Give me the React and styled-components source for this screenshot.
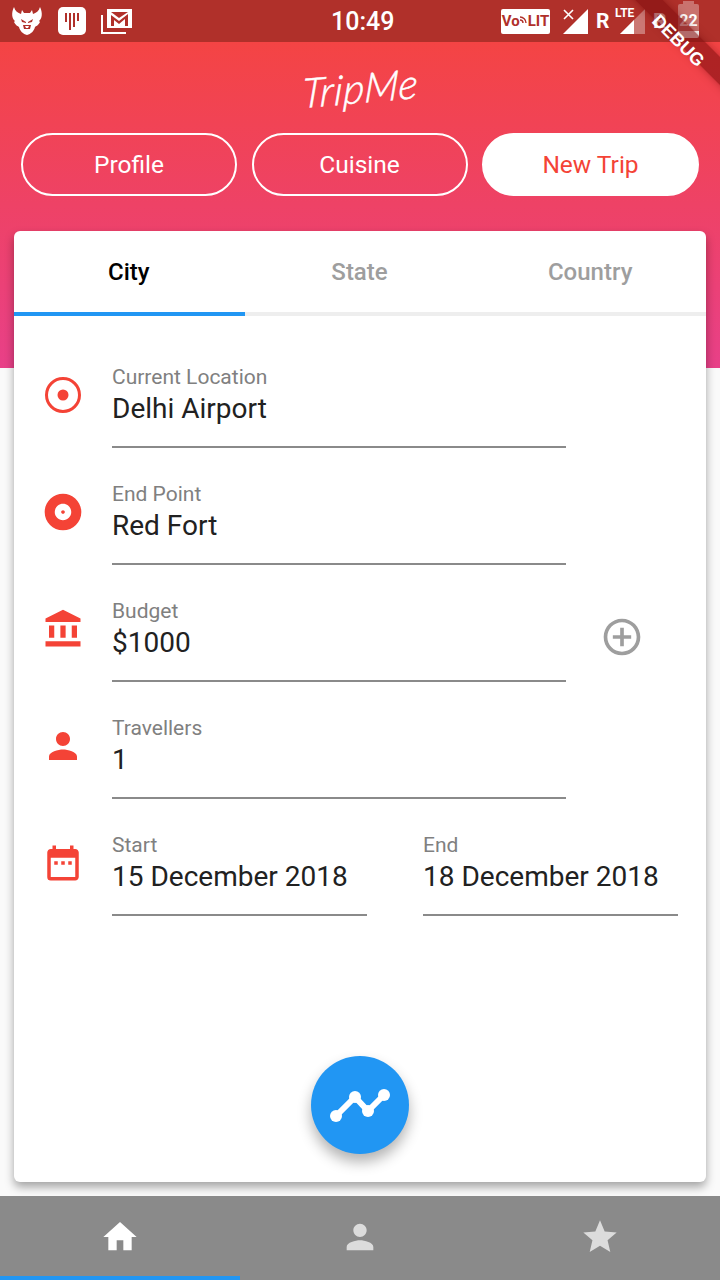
import React from "react";
import styled, { createGlobalStyle } from "styled-components";
import {
  MdAlbum,
  MdAccountBalance,
  MdPerson,
  MdDateRange,
  MdAddCircleOutline,
  MdHome,
  MdStar,
} from "react-icons/md";

const GlobalStyle = createGlobalStyle`
  html, body {
    margin: 0;
    padding: 0;
    background: #fafafa;
    font-family: Roboto, "Liberation Sans", sans-serif;
  }
  * {
    box-sizing: border-box;
  }
`;

const Screen = styled.div`
  width: 720px;
  height: 1280px;
  position: relative;
  overflow: hidden;
  display: flex;
  flex-direction: column;
  background: #fafafa;
`;

const StatusBar = styled.div`
  height: 42px;
  flex: none;
  background: #b0302a;
  display: grid;
  grid-template-columns: 320px 62px 1fr;
  align-items: center;
  padding: 0 21px 0 11px;
  color: #fff;
`;

const StatusLeft = styled.div`
  display: flex;
  align-items: center;
  gap: 15px;
`;

const StatusRight = styled.div`
  display: flex;
  align-items: center;
  justify-content: flex-end;
  gap: 8px;
`;

const Clock = styled.div`
  font-size: 25px;
  font-weight: 500;
  white-space: nowrap;
`;

const VolteBadge = styled.div`
  width: 49px;
  height: 25px;
  margin-right: 5px;
  background: #fff;
  border-radius: 2px;
  color: #b0302a;
  font-size: 15px;
  font-weight: 700;
  display: flex;
  align-items: center;
  justify-content: center;
  white-space: nowrap;
`;

const NetLetter = styled.span`
  font-size: 21px;
  font-weight: 700;
  width: 11px;
  line-height: 24px;
`;

const SignalWrap = styled.div`
  position: relative;
  width: ${(props) => props.width}px;
  height: 25px;
  display: flex;
  justify-content: flex-end;
`;

const TinyTag = styled.span`
  position: absolute;
  left: 0;
  top: -3px;
  font-size: 12px;
  font-weight: 700;
  line-height: 14px;
`;

const Battery = styled.div`
  width: 21px;
  height: 34px;
  margin-left: 6px;
  border-radius: 2px;
  background: linear-gradient(
    to bottom,
    rgba(255, 255, 255, 0.32) 78%,
    #fff 78%
  );
  font-size: 16px;
  font-weight: 700;
  text-align: center;
  line-height: 34px;
  padding-bottom: 4px;
  position: relative;
  &::before {
    content: "";
    position: absolute;
    top: -3px;
    left: 5px;
    width: 11px;
    height: 3px;
    background: rgba(255, 255, 255, 0.32);
  }
`;

const DebugBanner = styled.div`
  position: absolute;
  left: 584px;
  top: 25px;
  width: 200px;
  height: 20px;
  transform: rotate(45deg);
  background: rgba(130, 14, 14, 0.62);
  box-shadow: 0 0 8px rgba(90, 0, 0, 0.35);
  color: #fff;
  font-family: "Liberation Sans", sans-serif;
  font-size: 18px;
  font-weight: 700;
  line-height: 37px;
  text-align: center;
`;

const Main = styled.main`
  flex: 1;
  min-height: 0;
  display: flex;
  flex-direction: column;
  padding: 0 14px 14px;
  background: linear-gradient(to bottom, #f44444, #e84088) top / 100% 326px
      no-repeat,
    #fafafa;
`;

const Logo = styled.div`
  height: 91px;
  flex: none;
  display: flex;
  align-items: center;
  justify-content: center;
  color: #fff;
  font-family: Lato, sans-serif;
  font-style: italic;
  font-weight: 300;
  font-size: 41px;
  letter-spacing: 0.5px;
  -webkit-text-stroke: 0.5px #fff;
  span {
    transform: rotate(-5deg) skewX(-8deg);
    display: block;
  }
`;

const TopButtons = styled.div`
  display: flex;
  justify-content: space-between;
  padding: 0 7px;
  flex: none;
`;

const TopButton = styled.button`
  width: ${(props) => (props.active ? 217 : 216)}px;
  height: 63px;
  border-radius: 32px;
  border: 2px solid #fff;
  background: ${(props) => (props.active ? "#fff" : "transparent")};
  color: ${(props) => (props.active ? "#f44336" : "#fff")};
  font-family: Roboto, sans-serif;
  font-size: 24.5px;
  padding: 0;
`;

const Card = styled.section`
  flex: 1;
  margin-top: 35px;
  background: #fff;
  border-radius: 6px;
  box-shadow: 0 5px 10px rgba(0, 0, 0, 0.35);
  display: flex;
  flex-direction: column;
`;

const Tabs = styled.div`
  display: flex;
  height: 85px;
  flex: none;
  border-bottom: 4px solid #eeeeee;
`;

const Tab = styled.div`
  flex: 1;
  height: 85px;
  display: flex;
  align-items: center;
  justify-content: center;
  padding-right: 1px;
  font-size: 24px;
  font-weight: 500;
  color: ${(props) => (props.active ? "#000" : "#9e9e9e")};
  border-bottom: 4px solid ${(props) => (props.active ? "#2196f3" : "transparent")};
`;

const Form = styled.div`
  display: flex;
  flex-direction: column;
  gap: 34px;
  padding: 49px 0 0 27px;
`;

const Row = styled.div`
  display: flex;
  align-items: flex-start;
`;

const IconCell = styled.div`
  width: 44px;
  height: 44px;
  margin: 8px 27px 0 0;
  flex: none;
  color: #f44336;
  font-size: ${(props) => (props.large ? 44 : 42)}px;
  display: flex;
  align-items: center;
  justify-content: center;
`;

const Fields = styled.div`
  display: flex;
  gap: 56px;
`;

const Field = styled.div`
  width: ${(props) => props.width}px;
  height: 83px;
  border-bottom: 2px solid #8a8a8a;
`;

const FieldLabel = styled.div`
  font-size: 21px;
  line-height: 24px;
  color: #808080;
`;

const FieldValue = styled.div`
  font-size: 28px;
  line-height: 40px;
  color: #212121;
  white-space: nowrap;
`;

const AddAction = styled.div`
  width: 44px;
  height: 44px;
  margin: 16px 0 0 34px;
  color: #9e9e9e;
  font-size: 44px;
  display: flex;
`;

const Fab = styled.button`
  width: 98px;
  height: 98px;
  margin: auto 0 28px;
  align-self: center;
  border: 0;
  padding: 0;
  border-radius: 50%;
  background: #2196f3;
  display: flex;
  align-items: center;
  justify-content: center;
  box-shadow: 0 8px 14px rgba(0, 0, 0, 0.3);
`;

const BottomNav = styled.nav`
  height: 84px;
  flex: none;
  background: #8a8a8a;
  display: flex;
`;

const NavItem = styled.div`
  flex: 1;
  display: flex;
  align-items: flex-start;
  justify-content: center;
  padding-top: 21px;
  font-size: 40px;
  color: ${(props) => (props.active ? "#fff" : "#dcdcdc")};
  border-bottom: 4px solid ${(props) => (props.active ? "#2196f3" : "transparent")};
`;

const DragonMark = () => (
  <svg width="32" height="30" viewBox="0 0 32 30" fill="#fff">
    <path d="M3 1C4 5 7 7 10 8L11 4L13 7H19L21 4L22 8C25 7 28 5 29 1C32 7 31 13 28 15L29 16C27 20 25 20 24 21C23 25 20 28 16 29C12 28 9 25 8 21C7 20 5 20 3 16L4 15C1 13 0 7 3 1Z" />
    <path d="M10 13l5 3v1l-4-1zM22 13l-5 3v1l4-1zM12 19h8l-1 4h-6z" fill="#b0302a" />
    <path d="M14 20h4l-1 2h-2z" />
  </svg>
);

const BarsMark = () => (
  <svg width="28" height="28" viewBox="0 0 28 28">
    <rect width="28" height="28" rx="5" fill="#fff" />
    <g fill="#b0302a">
      <rect x="7" y="6" width="2" height="9" />
      <rect x="11" y="6" width="2" height="17" />
      <rect x="15" y="6" width="2" height="14" />
      <rect x="19" y="6" width="2" height="8" />
    </g>
  </svg>
);

const MailMark = () => (
  <svg width="32" height="28" viewBox="0 0 32 28" fill="none">
    <path d="M1 8v18h24" stroke="#fff" strokeWidth="2" />
    <path d="M6 3v18h25V2H6z" fill="#fff" />
    <path d="M10 19V8l8 6 9-7v12h-3v-7l-6 5-5-4v6z" fill="#b0302a" />
    <path d="M10 5h17l-9 6z" fill="#b0302a" />
  </svg>
);

const Signal = ({ dim, crossed }) => (
  <svg width="25" height="25" viewBox="0 0 25 25">
    <path d="M25 0v25H0z" fill={dim ? "rgba(255,255,255,0.35)" : "#fff"} />
    {dim && <path d="M14 11v14H0z" fill="#fff" />}
    {crossed && <path d="M1 1l9 9M10 1l-9 9" stroke="#fff" strokeWidth="1.6" />}
  </svg>
);

const WifiArcs = () => (
  <svg width="8" height="12" viewBox="0 0 8 12" fill="none" stroke="#b0302a" strokeWidth="1.4">
    <path d="M0 5a3 3 0 0 1 3 3M0 2a6 6 0 0 1 6 6" />
  </svg>
);

const RingIcon = () => (
  <svg width="44" height="44" viewBox="0 0 44 44" fill="none">
    <circle cx="22" cy="22" r="16.5" stroke="currentColor" strokeWidth="3" />
    <circle cx="22" cy="22" r="5.5" fill="currentColor" />
  </svg>
);

const TrendIcon = () => (
  <svg width="60" height="36" viewBox="0 0 60 36" fill="#fff">
    <path d="M6 29L25 10L38 24L54 8" fill="none" stroke="#fff" strokeWidth="6" />
    <circle cx="6" cy="29" r="6" />
    <circle cx="25" cy="10" r="6" />
    <circle cx="38" cy="24" r="6" />
    <circle cx="54" cy="8" r="6" />
  </svg>
);

const fields = [
  { icon: <RingIcon />, label: "Current Location", value: "Delhi Airport", large: true },
  { icon: <MdAlbum />, label: "End Point", value: "Red Fort", large: true },
  { icon: <MdAccountBalance />, label: "Budget", value: "$1000", add: true },
  { icon: <MdPerson />, label: "Travellers", value: "1" },
];

const App = () => {
  return (
    <Screen>
      <GlobalStyle />
      <StatusBar>
        <StatusLeft>
          <DragonMark />
          <BarsMark />
          <MailMark />
        </StatusLeft>
        <Clock>10:49</Clock>
        <StatusRight>
          <VolteBadge>
            Vo
            <WifiArcs />
            LIT
          </VolteBadge>
          <SignalWrap width={25}>
            <Signal crossed />
          </SignalWrap>
          <NetLetter>R</NetLetter>
          <SignalWrap width={30}>
            <TinyTag>LTE</TinyTag>
            <Signal dim />
          </SignalWrap>
          <NetLetter>R</NetLetter>
          <Battery>22</Battery>
        </StatusRight>
      </StatusBar>

      <Main>
        <Logo>
          <span>TripMe</span>
        </Logo>
        <TopButtons>
          <TopButton>Profile</TopButton>
          <TopButton>Cuisine</TopButton>
          <TopButton active>New Trip</TopButton>
        </TopButtons>
        <Card>
          <Tabs>
            <Tab active>City</Tab>
            <Tab>State</Tab>
            <Tab>Country</Tab>
          </Tabs>
          <Form>
            {fields.map((f) => (
              <Row key={f.label}>
                <IconCell large={f.large}>{f.icon}</IconCell>
                <Field width={454}>
                  <FieldLabel>{f.label}</FieldLabel>
                  <FieldValue>{f.value}</FieldValue>
                </Field>
                {f.add && (
                  <AddAction>
                    <MdAddCircleOutline />
                  </AddAction>
                )}
              </Row>
            ))}
            <Row>
              <IconCell>
                <MdDateRange />
              </IconCell>
              <Fields>
                <Field width={255}>
                  <FieldLabel>Start</FieldLabel>
                  <FieldValue>15 December 2018</FieldValue>
                </Field>
                <Field width={255}>
                  <FieldLabel>End</FieldLabel>
                  <FieldValue>18 December 2018</FieldValue>
                </Field>
              </Fields>
            </Row>
          </Form>
          <Fab>
            <TrendIcon />
          </Fab>
        </Card>
      </Main>

      <BottomNav>
        <NavItem active>
          <MdHome />
        </NavItem>
        <NavItem>
          <MdPerson />
        </NavItem>
        <NavItem>
          <MdStar />
        </NavItem>
      </BottomNav>

      <DebugBanner>DEBUG</DebugBanner>
    </Screen>
  );
};

export default App;
